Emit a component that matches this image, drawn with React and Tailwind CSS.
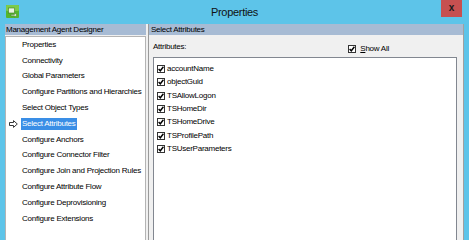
import React from 'react';

const steps = [
  'Properties',
  'Connectivity',
  'Global Parameters',
  'Configure Partitions and Hierarchies',
  'Select Object Types',
  'Select Attributes',
  'Configure Anchors',
  'Configure Connector Filter',
  'Configure Join and Projection Rules',
  'Configure Attribute Flow',
  'Configure Deprovisioning',
  'Configure Extensions',
];

const attributes = [
  'accountName',
  'objectGuid',
  'TSAllowLogon',
  'TSHomeDir',
  'TSHomeDrive',
  'TSProfilePath',
  'TSUserParameters',
];

const CheckBox = () => (
  <span className="w-[8px] h-[8px] border border-[#333] bg-white flex items-center justify-center shrink-0">
    <svg width="6" height="6" viewBox="0 0 6 6">
      <path d="M0.6 3 L2.3 4.8 L5.4 0.8" fill="none" stroke="#000" strokeWidth="1.4" />
    </svg>
  </span>
);

const AppIcon = () => (
  <svg width="13" height="13" viewBox="0 0 13 13">
    <rect x="0" y="0" width="13" height="13" rx="1" fill="#55b52c" />
    <rect x="0" y="0" width="13" height="6" rx="1" fill="#7ccb4a" />
    <rect x="2.5" y="3" width="6" height="5" fill="#e8f3e0" stroke="#3d7d1e" strokeWidth="0.6" />
    <path d="M5 9.5 H8.5 V8 L11 10 L8.5 12 V10.8 H5 Z" fill="#f4f4f4" stroke="#3d7d1e" strokeWidth="0.5" />
  </svg>
);

const Arrow = () => (
  <svg width="9" height="8" viewBox="0 0 9 8">
    <path d="M0.5 2.5 H4.5 V0.6 L8.3 4 L4.5 7.4 V5.5 H0.5 Z" fill="#fff" stroke="#222" strokeWidth="0.9" />
  </svg>
);

export default function App() {
  return (
    <div
      className="w-[469px] h-[240px] bg-[#5dc4e9] flex flex-col overflow-hidden text-black"
      style={{ fontFamily: '"Liberation Sans", Arial, sans-serif' }}
    >
      {/* title bar */}
      <div className="h-[24px] shrink-0 grid grid-cols-[1fr_auto_1fr]">
        <div className="pl-[6px] pt-[5px]">
          <AppIcon />
        </div>
        <div className="text-[11px] tracking-[-0.3px] text-[#111] flex items-center pt-[1px]">Properties</div>
        <div className="flex justify-end pr-[7px]">
          <div className="w-[21px] h-[17px] bg-[#c75050] flex items-center justify-center text-[10px] font-bold text-[#1a1a1a] leading-none pb-[1px]">
            x
          </div>
        </div>
      </div>

      {/* body */}
      <div className="flex-1 min-h-0 pl-[5px] pr-[5px]">
        <div className="h-full flex bg-[#f0f0f0] border-r border-[#a0a0a0] text-[8px] tracking-[-0.25px] leading-[10px]">
          {/* left column */}
          <div className="w-[141px] flex flex-col shrink-0">
            <div className="h-[11px] bg-[#a7bbd4] pl-[1px] flex items-center">Management Agent Designer</div>
            <div className="flex-1 mt-[1px] bg-white border border-[#b4b4b4] border-b-0 pt-0">
              {steps.map((s) => {
                const active = s === 'Select Attributes';
                return (
                  <div key={s} className="h-[15.8px] flex items-center">
                    <div className="w-[15px] pl-[3px] flex items-center shrink-0">{active && <Arrow />}</div>
                    <span
                      className={
                        active
                          ? 'bg-[#3a8ee6] text-white px-[1px] h-[12px] flex items-center'
                          : 'px-[1px]'
                      }
                    >
                      {s}
                    </span>
                  </div>
                );
              })}
            </div>
          </div>

          {/* right column */}
          <div className="flex-1 ml-[2px] border-l border-[#9a9a9a] flex flex-col">
            <div className="h-[11px] bg-[#a7bbd4] pl-[2px] flex items-center">Select Attributes</div>
            <div className="h-[22px] flex justify-between pl-[4px] pr-[74px] pt-[7px]">
              <span>Attributes:</span>
              <span className="flex items-center gap-[4px] mt-[-1px]">
                <CheckBox />
                <span>
                  <span className="underline">S</span>how All
                </span>
              </span>
            </div>
            <div className="flex-1 ml-[4px] mr-[6px] bg-white border border-[#828790] border-b-0 pt-[4.5px] pl-[3px]">
              {attributes.map((a) => (
                <div key={a} className="h-[13.3px] flex items-center gap-[2px]">
                  <CheckBox />
                  <span>{a}</span>
                </div>
              ))}
            </div>
          </div>
        </div>
      </div>
    </div>
  );
}
